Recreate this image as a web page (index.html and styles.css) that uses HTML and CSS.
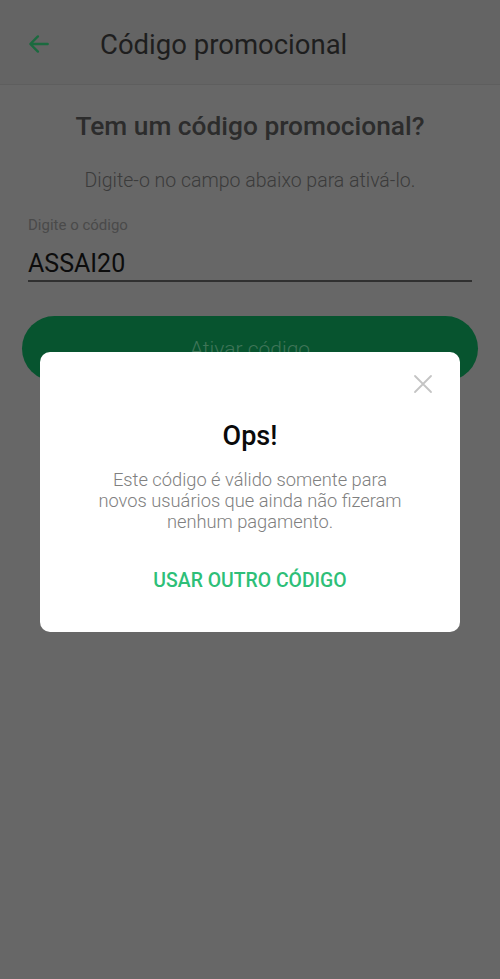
FILE: index.html
```html
<!DOCTYPE html>
<html lang="pt-BR">
<head>
    <meta charset="UTF-8">
    <meta name="viewport" content="width=device-width, initial-scale=1.0">
    <title>Código promocional</title>
    <link rel="stylesheet" href="styles.css">
</head>
<body>
    <!-- Top bar -->
    <div class="topbar">
        <svg class="back" width="26" height="26" viewBox="0 0 24 24">
            <path d="M20 12H5M11 5l-7 7 7 7" fill="none" stroke="currentColor" stroke-width="2.2" stroke-linecap="round" stroke-linejoin="round"/>
        </svg>
        <h1 class="title">Código promocional</h1>
    </div>

    <!-- Promo form -->
    <div class="content">
        <h2 class="question">Tem um código promocional?</h2>
        <p class="hint">Digite-o no campo abaixo para ativá-lo.</p>

        <div class="field">
            <label class="field-label">Digite o código</label>
            <div class="field-value">ASSAI20</div>
        </div>

        <button class="activate">Ativar código</button>
    </div>

    <!-- Error dialog -->
    <div class="dialog">
        <div class="dialog-close">
            <svg width="20" height="20" viewBox="0 0 20 20">
                <path d="M2 2L18 18M18 2L2 18" stroke="currentColor" stroke-width="1.8" stroke-linecap="round"/>
            </svg>
        </div>
        <h3 class="dialog-title">Ops!</h3>
        <p class="dialog-text">Este código é válido somente para novos usuários que ainda não fizeram nenhum pagamento.</p>
        <div class="dialog-action">USAR OUTRO CÓDIGO</div>
    </div>
</body>
</html>
```

FILE: styles.css
```css
/* Page under the dimmed overlay */
body {
    margin: 0;
    padding: 0;
    font-family: 'Roboto', 'Noto Sans', sans-serif;
    background-color: #676767;
    min-height: 979px;
    position: relative;
}

.topbar {
    height: 85px;
    background-color: #646464;
    border-bottom: 1px solid #5e5e5e;
    display: flex;
    align-items: center;
    padding: 4px 0 0 26px;
    box-sizing: border-box;
}

.back {
    color: #1b6a3f;
    margin-right: 48px;
}

.title {
    margin: 0;
    font-size: 27.5px;
    font-weight: 400;
    color: #1e1e1e;
}

.content {
    padding: 0 28px;
    display: flex;
    flex-direction: column;
}

.question {
    margin: 26px 0 0;
    text-align: center;
    font-size: 26.3px;
    font-weight: 500;
    color: #2c2c2c;
}

.hint {
    margin: 28px 0 0;
    text-align: center;
    font-size: 19.5px;
    font-weight: 300;
    color: #3b3b3b;
}

.field {
    margin-top: 24px;
    border-bottom: 2px solid #303030;
    padding-bottom: 2px;
}

.field-label {
    display: block;
    font-size: 15px;
    color: #4a4a4a;
}

.field-value {
    margin-top: 15px;
    font-size: 25px;
    color: #0c0c0c;
}

.activate {
    margin: 34px -6px 0;
    height: 65px;
    border: none;
    border-radius: 33px;
    background-color: #07542f;
    color: #3f7558;
    font-family: inherit;
    font-size: 21px;
    font-weight: 300;
}

/* Dialog */
.dialog {
    position: absolute;
    left: 40px;
    top: 352px;
    width: 420px;
    height: 280px;
    background-color: #fff;
    border-radius: 10px;
    box-sizing: border-box;
    text-align: center;
}

.dialog-close {
    position: absolute;
    right: 27px;
    top: 22px;
    color: #c4c4c4;
}

.dialog-title {
    margin: 68px 0 0;
    font-size: 27px;
    font-weight: 500;
    color: #0a0a0a;
}

.dialog-text {
    margin: 17px auto 0;
    width: 310px;
    font-size: 18.3px;
    font-weight: 300;
    line-height: 21px;
    color: #808080;
}

.dialog-action {
    margin-top: 37px;
    font-size: 19.4px;
    font-weight: 500;
    color: #2ebf78;
}
```
